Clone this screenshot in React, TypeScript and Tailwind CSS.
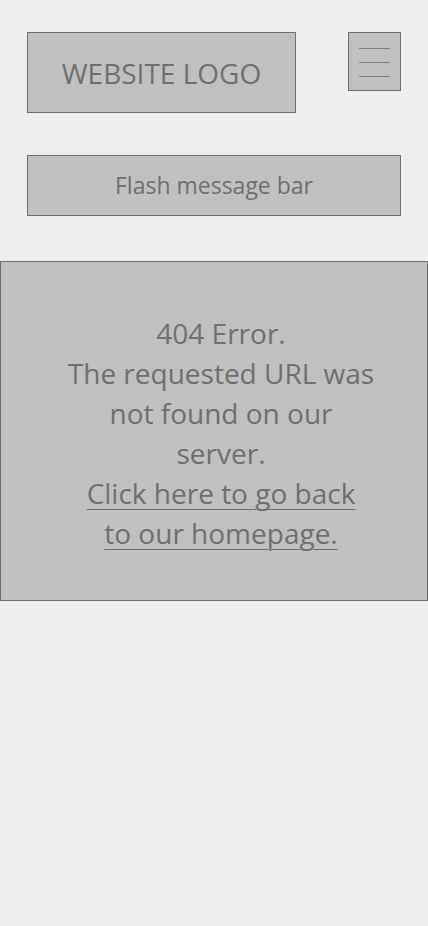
export default function App() {
  return (
    <div
      className="min-h-screen bg-[#eeeeee] text-[#707070]"
      style={{ fontFamily: '"Open Sans", "Noto Sans", sans-serif' }}
    >
      <div className="px-[27px] pt-[32px]">
        <header className="flex items-start justify-between">
          <div className="flex h-[81px] w-[269px] items-center justify-center border border-[#707070] bg-[#c0c0c0]">
            <span className="text-[28px] leading-none">WEBSITE LOGO</span>
          </div>
          <button className="flex h-[59px] w-[53px] flex-col items-center justify-center gap-[13px] border border-[#707070] bg-[#c0c0c0] pt-[2px]">
            <span className="block h-px w-[31px] bg-[#808080]" />
            <span className="block h-px w-[31px] bg-[#808080]" />
            <span className="block h-px w-[31px] bg-[#808080]" />
          </button>
        </header>
        <div className="mt-[42px] flex h-[61px] items-center justify-center border border-[#707070] bg-[#c0c0c0]">
          <span className="text-[23px]">Flash message bar</span>
        </div>
      </div>
      <main className="mt-[45px] border border-[#707070] bg-[#c0c0c0] pt-[51px] pb-[47px] pl-[14px] text-center text-[28px] leading-[40px]">
        <p>
          404 Error.
          <br />
          The requested URL was
          <br />
          not found on our
          <br />
          server.
        </p>
        <a href="#" className="underline decoration-1 underline-offset-[5px]">
          Click here to go back
          <br />
          to our homepage.
        </a>
      </main>
    </div>
  );
}
